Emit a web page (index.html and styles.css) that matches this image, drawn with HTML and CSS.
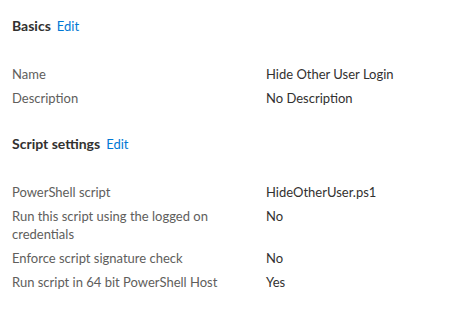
FILE: index.html
```html
<!DOCTYPE html>
<html lang="en">
<head>
    <meta charset="UTF-8">
    <meta name="viewport" content="width=device-width, initial-scale=1.0">
    <title>Script properties</title>
    <link rel="stylesheet" href="styles.css">
</head>
<body>

    <div class="section">
        <div class="section-title">
            <h2>Basics</h2>
            <a href="#">Edit</a>
        </div>
        <div class="props">
            <div class="label">Name</div>
            <div class="value">Hide Other User Login</div>
            <div class="label">Description</div>
            <div class="value">No Description</div>
        </div>
    </div>

    <div class="section">
        <div class="section-title">
            <h2>Script settings</h2>
            <a href="#">Edit</a>
        </div>
        <div class="props">
            <div class="label">PowerShell script</div>
            <div class="value">HideOtherUser.ps1</div>
            <div class="label">Run this script using the logged on credentials</div>
            <div class="value">No</div>
            <div class="label">Enforce script signature check</div>
            <div class="value">No</div>
            <div class="label">Run script in 64 bit PowerShell Host</div>
            <div class="value">Yes</div>
        </div>
    </div>

</body>
</html>
```

FILE: styles.css
```css
body {
    font-family: Lato, "Open Sans", sans-serif;
    font-size: 13px;
    color: #323130;
    background-color: white;
    margin: 0;
    padding: 16px 12px 0 12px;
}
.section {
    margin-bottom: 27px;
}
.section-title {
    display: flex;
    align-items: baseline;
    gap: 6px;
    line-height: 20px;
    margin-bottom: 29px;
}
.section-title h2 {
    margin: 0;
    font-size: 14px;
    font-weight: bold;
    color: #323130;
}
.section-title a {
    color: #0078d4;
    font-size: 13px;
    text-decoration: none;
}
.props {
    display: grid;
    grid-template-columns: 242px 1fr;
    column-gap: 12px;
    row-gap: 6px;
    line-height: 18px;
}
.label {
    color: #605e5c;
}
.value {
    color: #323130;
}
```
